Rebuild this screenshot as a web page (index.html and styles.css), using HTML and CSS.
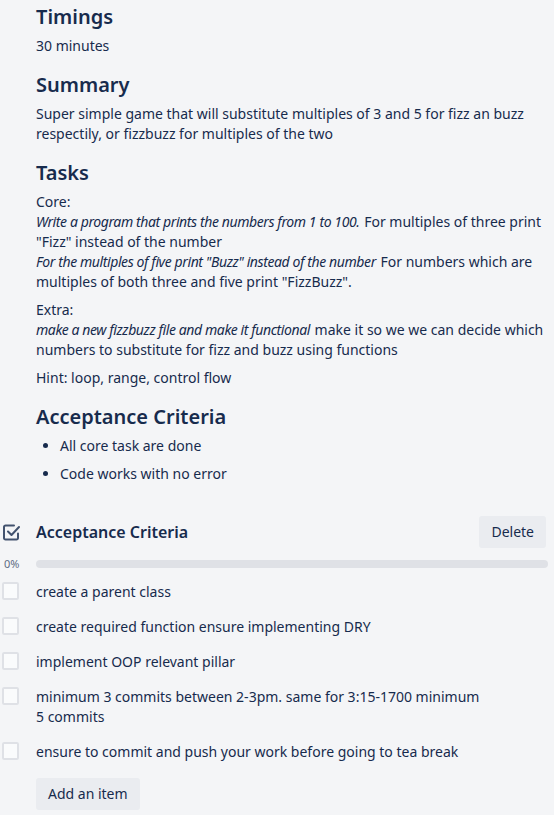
FILE: index.html
```html
<!DOCTYPE html>
<html lang="en">
<head>
<meta charset="utf-8">
<title>Card</title>
<link rel="stylesheet" href="styles.css">
</head>
<body>
<div class="desc">
  <h2>Timings</h2>
  <p>30 minutes</p>
  <h2>Summary</h2>
  <p>Super simple game that will substitute multiples of 3 and 5 for fizz an buzz respectily, or fizzbuzz for multiples of the two</p>
  <h2>Tasks</h2>
  <p>Core:<br><em>Write a program that prints the numbers from 1 to 100.</em> For multiples of three print "Fizz" instead of the number<br><em>For the multiples of five print "Buzz" instead of the number</em> For numbers which are multiples of both three and five print "FizzBuzz".</p>
  <p>Extra:<br><em>make a new fizzbuzz file and make it functional</em> make it so we we can decide which numbers to substitute for fizz and buzz using functions</p>
  <p>Hint: loop, range, control flow</p>
  <h2>Acceptance Criteria</h2>
  <ul>
    <li>All core task are done</li>
    <li>Code works with no error</li>
  </ul>
</div>

<section class="checklist">
  <div class="cl-head">
    <svg class="cl-icon" width="17" height="17" viewBox="0 0 17 17" aria-hidden="true">
      <path d="M15 9.5V14a1.5 1.5 0 0 1-1.5 1.5h-11A1.5 1.5 0 0 1 1 14V3a1.5 1.5 0 0 1 1.5-1.5H11" fill="none" stroke="#42526e" stroke-width="2" stroke-linecap="round"/>
      <path d="M5 7.5l3.5 3.5L16 3" fill="none" stroke="#42526e" stroke-width="2" stroke-linecap="round" stroke-linejoin="round"/>
    </svg>
    <h3 class="cl-title">Acceptance Criteria</h3>
    <button class="btn del">Delete</button>
  </div>
  <div class="cl-progress">
    <span class="pct">0%</span>
    <div class="bar"></div>
  </div>
  <ul class="items">
    <li class="item"><span class="box"></span><span class="txt">create a parent class</span></li>
    <li class="item"><span class="box"></span><span class="txt">create required function ensure implementing DRY</span></li>
    <li class="item"><span class="box"></span><span class="txt">implement OOP relevant pillar</span></li>
    <li class="item"><span class="box"></span><span class="txt">minimum 3 commits between 2-3pm. same for 3:15-1700 minimum<br>5 commits</span></li>
    <li class="item"><span class="box"></span><span class="txt">ensure to commit and push your work before going to tea break</span></li>
  </ul>
  <button class="btn add">Add an item</button>
</section>
</body>
</html>
```
FILE: styles.css
```css
* { box-sizing: border-box; }
html, body {
  margin: 0;
  background: #f4f5f7;
}
body {
  font-family: "Noto Sans", "Open Sans", sans-serif;
  font-size: 14px;
  line-height: 20px;
  color: #172b4d;
}
.desc {
  padding: 5px 0 0 36px;
}
.desc h2 {
  font-size: 20px;
  line-height: 24px;
  font-weight: 600;
  margin: 17px 0 7px;
}
.desc h2:first-child { margin-top: 0; }
.desc p {
  margin: 0 0 8px;
}
.desc em {
  font-style: italic;
  letter-spacing: -0.4px;
  padding-right: 1px;
}
.desc ul {
  margin: 0;
  padding-left: 24px;
}
.desc li {
  margin-bottom: 8px;
}
.checklist {
  margin-top: 32px;
  padding: 0 6px 0 0;
}
.cl-head {
  display: flex;
  align-items: center;
  height: 32px;
}
.cl-icon {
  width: 17px;
  height: 17px;
  margin: 0 16px 0 3px;
  flex: none;
}
.cl-title {
  flex: 1;
  margin: 0;
  font-size: 16px;
  line-height: 20px;
  font-weight: 600;
}
.btn {
  font: inherit;
  color: #172b4d;
  background: #eaecf0;
  border: none;
  border-radius: 3px;
  height: 32px;
  padding: 6px 12px;
  cursor: pointer;
}
.del {
  margin-right: 2px;
}
.cl-progress {
  display: flex;
  align-items: center;
  height: 16px;
  margin-top: 8px;
}
.pct {
  width: 36px;
  padding-left: 4px;
  font-size: 11px;
  line-height: 16px;
  color: #5e6c84;
}
.bar {
  flex: 1;
  height: 8px;
  border-radius: 4px;
  background: #dfe1e6;
}
.items {
  list-style: none;
  margin: 2px 0 0;
  padding: 0;
}
.item {
  display: flex;
  align-items: flex-start;
  padding: 8px 0 7px;
}
.box {
  flex: none;
  width: 17px;
  height: 18px;
  margin: 0 17px 0 2px;
  border-radius: 2px;
  background: #fafbfc;
  box-shadow: inset 0 0 0 2px #dfe1e6;
}
.txt {
  flex: 1;
}
.add {
  margin: 9px 0 0 36px;
}
```
